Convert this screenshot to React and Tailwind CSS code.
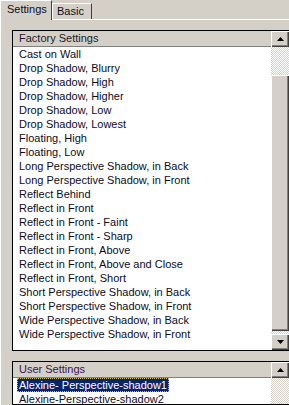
import React from "react";

const factory = [
  "Cast on Wall",
  "Drop Shadow, Blurry",
  "Drop Shadow, High",
  "Drop Shadow, Higher",
  "Drop Shadow, Low",
  "Drop Shadow, Lowest",
  "Floating, High",
  "Floating, Low",
  "Long Perspective Shadow, in Back",
  "Long Perspective Shadow, in Front",
  "Reflect Behind",
  "Reflect in Front",
  "Reflect in Front - Faint",
  "Reflect in Front - Sharp",
  "Reflect in Front, Above",
  "Reflect in Front, Above and Close",
  "Reflect in Front, Short",
  "Short Perspective Shadow, in Back",
  "Short Perspective Shadow, in Front",
  "Wide Perspective Shadow, in Back",
  "Wide Perspective Shadow, in Front",
];

const raised =
  "bg-[#d4d0c8] shadow-[inset_1px_1px_0_#ffffff,inset_-1px_-1px_0_#404040,inset_-2px_-2px_0_#808080]";
const track =
  "bg-[image:repeating-conic-gradient(#d4d0c8_0%_25%,#ffffff_0%_50%)] bg-[length:2px_2px]";

function Arrow({ down }) {
  return (
    <div className={`h-[16px] w-full flex items-center justify-center ${raised}`}>
      <svg width="7" height="4" viewBox="0 0 7 4" className={down ? "rotate-180" : ""}>
        <polygon points="3.5,0 7,4 0,4" fill="#000" />
      </svg>
    </div>
  );
}

export default function App() {
  return (
    <div className="w-[289px] h-[405px] overflow-hidden bg-[#d4d0c8] font-['Liberation_Sans',Arial,sans-serif] text-[11px] text-[#0c0c1c]">
      {/* Tabs */}
      <div className="flex items-end h-[20px]">
        <div className="h-[20px] w-[52px] border-l border-t border-white border-r border-r-[#404040] pl-[6px] leading-[17px]">
          Settings
        </div>
        <div className="flex flex-col w-[40px]">
          <div className="h-[16px] border-l border-t border-white border-r border-r-[#404040] pl-[4px] leading-[15px]">
            Basic
          </div>
          <div className="h-[1px] bg-white" />
        </div>
        <div className="flex-1 h-[1px] bg-white" />
      </div>

      {/* Panel */}
      <div className="border-l border-white h-[385px] pl-[11px] pt-[10px]">
        {/* Factory box */}
        <div className="w-[278px] h-[321px] border border-black bg-white flex">
          <div className="flex-1 flex flex-col">
            <div className="h-[16px] bg-[#d4d0c8] border-b border-[#808080] pl-[6px] leading-[15px] text-[#1e1a28]">
              Factory Settings
            </div>
            {factory.map((t) => (
              <div key={t} className="h-[14px] leading-[14px] pl-[6px] whitespace-nowrap">
                {t}
              </div>
            ))}
          </div>
          <div className="w-[18px] flex flex-col">
            <Arrow />
            <div className={`h-[28px] ${track}`} />
            <div className={`h-[256px] ${raised}`} />
            <div className={`flex-1 ${track}`} />
            <Arrow down />
          </div>
        </div>

        {/* User box */}
        <div className="mt-[10px] w-[278px] h-[44px] border border-black bg-white flex overflow-hidden">
          <div className="flex-1 flex flex-col">
            <div className="h-[16px] shrink-0 bg-[#d4d0c8] border-b border-[#808080] pl-[6px] leading-[15px] text-[#3a1450]">
              User Settings
            </div>
            <div className="h-[14px] shrink-0 pl-[4px] flex">
              <span className="h-[14px] leading-[14px] px-[2px] bg-[#0a246a] text-white outline-1 outline-dotted outline-[#c8c070] -outline-offset-1 whitespace-nowrap">
                Alexine- Perspective-shadow1
              </span>
            </div>
            <div className="h-[14px] shrink-0 leading-[14px] pl-[6px] whitespace-nowrap">
              Alexine-Perspective-shadow2
            </div>
          </div>
          <div className="w-[18px] flex flex-col">
            <Arrow />
            <div className={`flex-1 ${track}`} />
          </div>
        </div>
      </div>
    </div>
  );
}
